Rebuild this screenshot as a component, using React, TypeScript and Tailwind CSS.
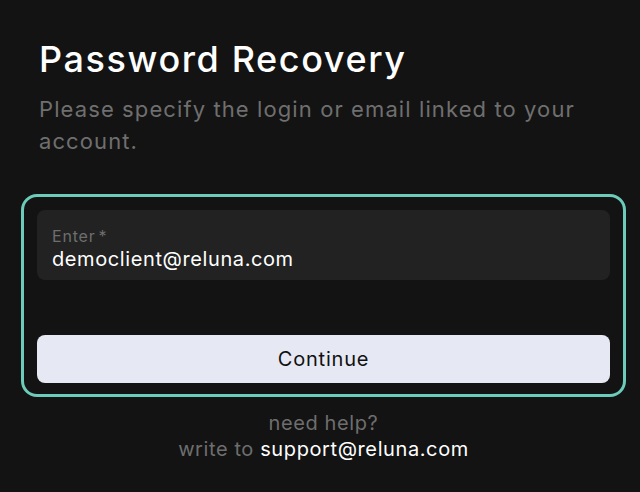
export default function App() {
  return (
    <div
      className="w-[640px] h-[492px] bg-[#131313] overflow-hidden flex flex-col"
      style={{ fontFamily: 'Inter, "Noto Sans", sans-serif' }}
    >
      <div className="pl-[39px] pr-[30px] pt-[35px]">
        <h1 className="text-[36px] leading-[48px] font-medium text-white tracking-[1.6px]">
          Password Recovery
        </h1>
        <p className="mt-[10px] text-[22px] leading-[32px] text-[#6f6f6f] tracking-[1.1px]">
          Please specify the login or email linked to your account.
        </p>
      </div>
      <div className="ml-[21px] mr-[14px] flex flex-col">
        <div className="mt-[37px] border-[3px] border-[#6ccbb9] rounded-[16px] p-[13px] pb-[11px] flex flex-col">
          <div className="h-[70px] bg-[#222222] rounded-[8px] px-[15px] pt-[16px] flex flex-col">
            <span className="text-[16px] leading-[20px] text-[#6e6e6e] tracking-[0.8px]">
              Enter<span className="ml-[3px]">*</span>
            </span>
            <span className="text-[20px] leading-[26px] text-white tracking-[0.6px]">democlient@reluna.com</span>
          </div>
          <button className="mt-[55px] h-[48px] bg-[#e6e8f4] rounded-[8px] text-[20px] text-[#111111] tracking-[0.8px]">
            Continue
          </button>
        </div>
        <div className="mt-[13px] flex flex-col items-center text-[20px] leading-[26px] tracking-[0.6px]">
          <span className="text-[#6e6e6e]">need help?</span>
          <span className="text-[#6e6e6e]">
            write to <span className="text-white">support@reluna.com</span>
          </span>
        </div>
      </div>
    </div>
  );
}
